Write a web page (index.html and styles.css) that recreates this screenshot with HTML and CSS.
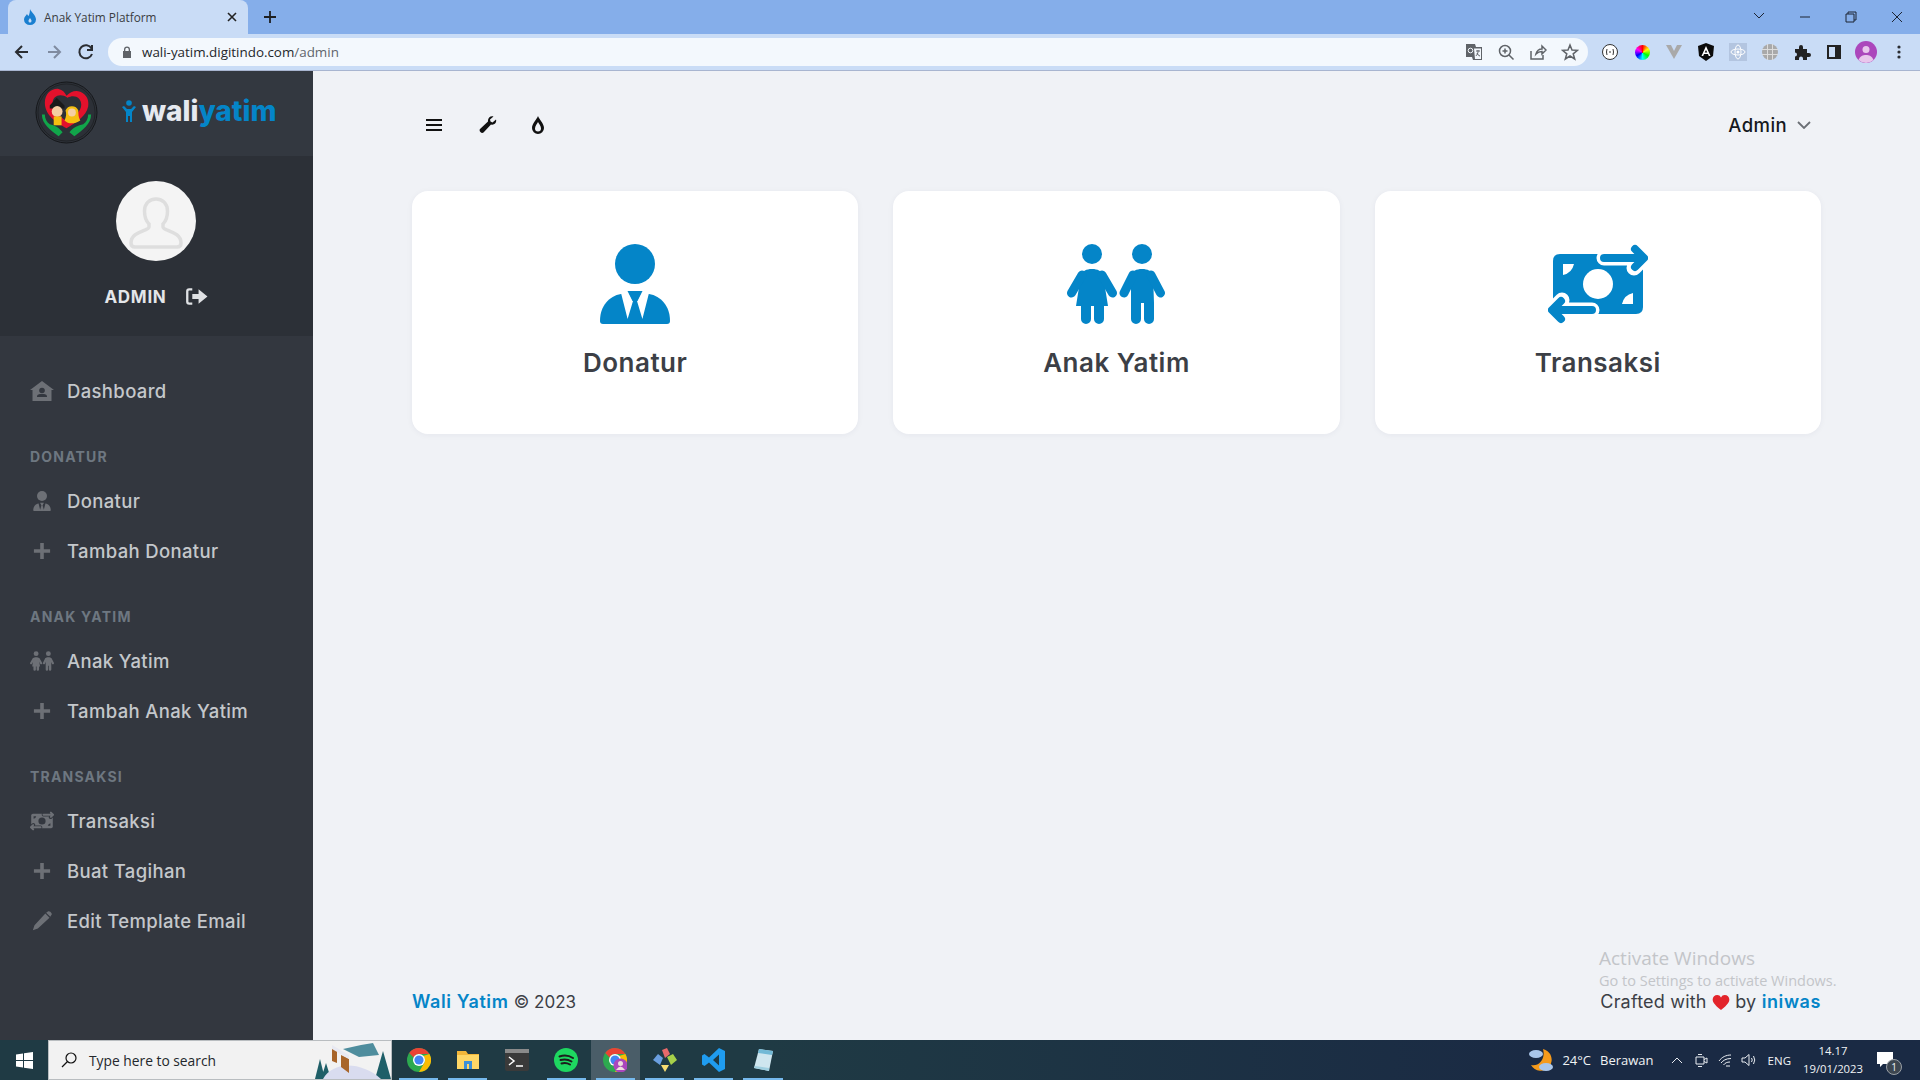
FILE: index.html
```html
<!DOCTYPE html>
<html lang="id">
<head>
<meta charset="utf-8">
<title>Anak Yatim Platform</title>
<link rel="stylesheet" href="styles.css">
</head>
<body>
<svg class="defs" width="0" height="0">
  <symbol id="i-person" viewBox="0 0 70 80">
    <circle cx="35" cy="20" r="20"/>
    <path d="M0 77C0 62 9 52 21 50L49 50C61 52 70 62 70 77Q70 80 67 80L3 80Q0 80 0 77Z"/>
    <path class="cut" d="M21 49L27.6 75 33 57 28 47ZM49 49L42.4 75 37 57 42 47Z"/>
    <path d="M27.5 47H42.5L37.5 57H32.5Z"/>
  </symbol>
  <symbol id="i-kids" viewBox="0 0 98 80">
    <circle cx="25" cy="10" r="10"/>
    <circle cx="75" cy="10" r="10"/>
    <path d="M25 25C31 25 34 27 36 31L41 62H37V75A5 5 0 0 1 27 75V62H24V75A5 5 0 0 1 14 75V62H9L14 31C16 27 19 25 25 25Z"/>
    <path class="limb" d="M15 31 4.500 49M35 31 45.500 49"/>
    <path d="M75 25C81 25 84 27 86 31L87 59V75A5 5 0 0 1 77 75V59H74V75A5 5 0 0 1 64 75V59L64 31C66 27 69 25 75 25Z"/>
    <path class="limb" d="M66 31 57 49M84 31 93.500 49"/>
  </symbol>
  <symbol id="i-money" viewBox="0 0 100 80">
    <path d="M12 10H88Q95 10 95 17V63Q95 70 88 70H12Q5 70 5 63V17Q5 10 12 10Z"/>
    <circle class="cut" cx="50" cy="40" r="15"/>
    <path class="cut" d="M15 20H26Q24 29 15 31ZM85 60H74Q76 51 85 49Z"/>
    <g class="cutline">
      <path d="M56 14H90M86 4 96 14 86 24"/>
      <path d="M44 66H10M14 56 4 66 14 76"/>
    </g>
    <g class="arrow">
      <path d="M56 14H92M87 5 96 14 87 23"/>
      <path d="M44 66H8M13 57 4 66 13 75"/>
    </g>
  </symbol>
  <symbol id="i-plus" viewBox="0 0 20 20"><path d="M8 1H12V8H19V12H12V19H8V12H1V8H8Z"/></symbol>
  <symbol id="i-chrome" viewBox="0 0 24 24">
    <circle cx="12" cy="12" r="12" fill="#2da94f"/>
    <path fill="#ea4335" d="M12 0A12 12 0 0 1 22.4 6H12A6 6 0 0 0 6.6 9.5L2.2 5A12 12 0 0 1 12 0Z"/>
    <path fill="#fbbc04" d="M22.4 6A12 12 0 0 1 12 24L17.2 15A6 6 0 0 0 16 8Z"/>
    <circle cx="12" cy="12" r="6" fill="#fff"/>
    <circle cx="12" cy="12" r="4.6" fill="#4285f4"/>
  </symbol>
</svg>

<header class="tabstrip">
  <div class="tab">
    <svg class="favicon" viewBox="0 0 14 16"><path fill-rule="evenodd" d="M7 0C8 3 13 6 13 10.500A6 5.500 0 0 1 1 10.500C1 8 3 6.500 4 5 4.500 6 5 6.500 5.500 7 6.500 5 7 2.500 7 0ZM7 9C6 10.500 5.500 11 5.500 12A1.500 1.500 0 0 0 8.500 12C8.500 11 8 10.500 7 9Z" fill="#1a7fd0"/></svg>
    <span class="tab-title">Anak Yatim Platform</span>
    <svg class="tab-close" viewBox="0 0 10 10"><path d="M1 1 9 9M9 1 1 9"/></svg>
  </div>
  <svg class="new-tab" viewBox="0 0 12 12"><path d="M6 0V12M0 6H12"/></svg>
  <div class="window-controls">
    <svg class="win-btn" viewBox="0 0 46 28"><path d="M18 10 23 15 28 10"/></svg>
    <svg class="win-btn" viewBox="0 0 46 28"><path d="M18 14H28"/></svg>
    <svg class="win-btn" viewBox="0 0 46 28"><path d="M18 11H26V19H18ZM20 11V9H28V17H26"/></svg>
    <svg class="win-btn" viewBox="0 0 46 28"><path d="M18 9 28 19M28 9 18 19"/></svg>
  </div>
</header>

<div class="toolbar">
  <svg class="nav-btn" viewBox="0 0 32 32"><path d="M22 16H10M16 10 10 16 16 22"/></svg>
  <svg class="nav-btn nav-off" viewBox="0 0 32 32"><path d="M10 16H22M16 10 22 16 16 22"/></svg>
  <svg class="nav-btn" viewBox="0 0 32 32"><path d="M21.500 12.500A6.500 6.500 0 1 0 22 18M22 9V14H17"/></svg>
  <div class="omnibox">
    <svg class="lock" viewBox="0 0 10 12"><path d="M1 5H2V3.500A3 3 0 0 1 8 3.500V5H9V12H1ZM3.300 5H6.700V3.500A1.700 1.700 0 0 0 3.300 3.500Z"/></svg>
    <span class="url">wali-yatim.digitindo.com<span class="url-path">/admin</span></span>
    <span class="omni-actions">
      <svg class="tb-icon" viewBox="0 0 18 18"><path fill="#5f6368" d="M1 1H10L11 4H17V17H8L7 14H1Z"/><path fill="#f3f8fd" d="M9 5.500H16V16H10Z"/><path fill="none" stroke="#5f6368" d="M11 8H15M13 7V8.500C13 10.500 12 12 10.800 13M12 10C12.500 11.500 13.500 12.500 15 13"/><circle cx="5.500" cy="7.500" r="2.300" fill="none" stroke="#f3f8fd"/></svg>
      <svg class="tb-icon stroke" viewBox="0 0 18 18"><circle cx="8" cy="8" r="5.500"/><path d="M12 12 16.500 16.500M8 5.500V10.500M5.500 8H10.500"/></svg>
      <svg class="tb-icon stroke" viewBox="0 0 18 18"><path d="M2 8V16H14V12M7 11C8 7 11 6 13 6V3L17 7 13 11V8.500C10 8.500 8.500 9.500 7 11Z"/></svg>
      <svg class="tb-icon stroke" viewBox="0 0 18 18"><path d="M9 2 11 7 16.500 7.300 12.200 10.800 13.700 16 9 13 4.300 16 5.800 10.800 1.500 7.300 7 7Z"/></svg>
    </span>
  </div>
  <div class="extensions">
    <svg class="ext" viewBox="0 0 18 18"><circle cx="9" cy="9" r="7.500" fill="#fff" stroke="#333"/><path fill="none" stroke="#333" d="M6 6Q5 9 6 12M12 6Q13 9 12 12M8 9H10"/></svg>
    <span class="ext-slot"><span class="ext-wheel"></span></span>
    <svg class="ext" viewBox="0 0 18 18"><path fill="#a9a9a9" d="M1 2H17L9 16Z"/><path fill="#c9dcf6" d="M6 2H12L9 8Z"/></svg>
    <svg class="ext" viewBox="0 0 18 18"><path fill="#0b0b0b" d="M9 0 17 3 16 13 9 18 2 13 1 3Z"/><path fill="#fff" d="M9 3 13.500 13H11.800L11 11H7L6.200 13H4.500ZM9 7 7.700 9.600H10.300Z"/></svg>
    <svg class="ext ext-react" viewBox="0 0 18 18"><g fill="none" stroke="#fff"><ellipse cx="9" cy="9" rx="7" ry="3"/><ellipse cx="9" cy="9" rx="3" ry="7"/></g><circle cx="9" cy="9" r="1.500" fill="#fff"/></svg>
    <svg class="ext" viewBox="0 0 18 18"><circle cx="9" cy="9" r="8" fill="#a9a9a9"/><path fill="none" stroke="#dcdcdc" d="M1 6.500H17M1 11.500H17M6.500 1V17M11.500 1V17"/></svg>
    <svg class="ext" viewBox="0 0 18 18"><path fill="#222" d="M2 6H6V4A2 2 0 0 1 10 4V6H14V10H16A2 2 0 0 1 16 14H14V17H10V15.500A2 2 0 0 0 6 15.500V17H2V13.500A2 2 0 0 0 2 9.500Z"/></svg>
    <svg class="ext" viewBox="0 0 18 18"><path fill="#222" fill-rule="evenodd" d="M2 2H16V16H2ZM4 4V14H10V4Z"/></svg>
    <svg class="avatar-chip" viewBox="0 0 22 22"><circle cx="11" cy="11" r="11" fill="#ab47bc"/><circle cx="11" cy="8.500" r="3.500" fill="#e8c6ec"/><path d="M3.500 19A11 11 0 0 0 18.500 19C17 15 14 14 11 14S5 15 3.500 19Z" fill="#e8c6ec"/></svg>
    <svg class="dots" viewBox="0 0 4 14"><circle cx="2" cy="2" r="1.600"/><circle cx="2" cy="7" r="1.600"/><circle cx="2" cy="12" r="1.600"/></svg>
  </div>
</div>

<div class="app">
  <aside class="sidebar">
    <div class="brand">
      <svg class="logo" viewBox="0 0 64 64">
        <circle cx="32" cy="32" r="31" fill="#2c3037" stroke="#15171a"/>
        <circle cx="32" cy="32" r="29" fill="none" stroke="#17191c" stroke-width="0.600"/>
        <path fill="#e3112c" d="M32 48C22 42 10 35 10 22 10 12 18 7 24 8 28 9 30 11 32 15 36 11 41 9 46 11 53 14 55 20 54 26 52 36 42 42 32 48Z"/>
        <path fill="#2c3037" d="M33 17C26 12 18 15 18 22 18 30 25 35 32 41 39 37 47 31 47 24 47 17 40 13 33 17Z"/>
        <path fill="#1a1a1a" d="M15 25 22 17 30 25V28H15Z"/>
        <circle cx="22.500" cy="31" r="5.500" fill="#f5cfa3"/>
        <path fill="#f5bf10" d="M19 36H27V45H19Z"/>
        <path fill="#f5bf10" d="M30 40C32 36 32 33 31 30A7 7 0 0 1 44 30C44 33 44 37 46 40 40 44 34 44 30 40Z"/>
        <circle cx="37.500" cy="32" r="4" fill="#f5cfa3"/>
        <path fill="#11a54a" d="M7 34C7 44 16 50 24 56L28 52C24 47 20 45 15 44 12 42 10 38 10 34ZM57 34C57 44 48 50 40 56L35 52C39 47 44 45 49 44 52 42 54 38 54 34Z"/>
      </svg>
      <span class="wordmark">
        <svg class="wordmark-fig" viewBox="0 0 14 22"><circle cx="7" cy="3" r="2.800"/><path d="M0 7 2 6 5 9H9L12 6 14 7 10 12V22H8V16H6V22H4V12Z"/></svg>
        <span class="wm-white">wali</span><span class="wm-blue">yatim</span>
      </span>
    </div>
    <div class="user-box">
      <svg class="user-avatar" viewBox="0 0 80 80">
        <circle cx="40" cy="40" r="40" fill="#f4f4f4"/>
        <path fill="none" stroke="#dedede" stroke-width="3.500" d="M40 18C33 18 28.500 23 28.500 30 28.500 35 30 40 33 43V46C33 50 15 50 15 62 15 65 17 66 19 66H61C63 66 65 65 65 62 65 50 47 50 47 46V43C50 40 51.500 35 51.500 30 51.500 23 47 18 40 18Z"/>
      </svg>
      <div class="user-name">ADMIN
        <svg class="logout" viewBox="0 0 21 16"><path fill="none" stroke="#dfe1e4" stroke-width="2.200" d="M6 1.200H3Q1.200 1.200 1.200 3V13Q1.200 14.800 3 14.800H6"/><path fill="#dfe1e4" d="M6 5.500H12V1L20.500 8 12 15V10.500H6Z"/></svg>
      </div>
    </div>
    <nav class="menu">
      <a class="item"><svg class="item-icon" viewBox="0 0 24 20"><path d="M12 0 24 9H21.500V20H2.500V9H0Z"/><circle class="hole" cx="12" cy="9.500" r="2.800"/><path class="hole" d="M7 16C7 13 9 13 12 13S17 13 17 16Z"/></svg>Dashboard</a>
      <div class="label">DONATUR</div>
      <a class="item"><svg class="item-icon icon-gray" viewBox="0 0 24 22"><use href="#i-person"/></svg>Donatur</a>
      <a class="item"><svg class="item-icon icon-plus" viewBox="0 0 20 20"><use href="#i-plus"/></svg>Tambah Donatur</a>
      <div class="label">ANAK YATIM</div>
      <a class="item"><svg class="item-icon icon-gray" viewBox="0 0 24 20"><use href="#i-kids"/></svg>Anak Yatim</a>
      <a class="item"><svg class="item-icon icon-plus" viewBox="0 0 20 20"><use href="#i-plus"/></svg>Tambah Anak Yatim</a>
      <div class="label">TRANSAKSI</div>
      <a class="item"><svg class="item-icon icon-gray" viewBox="0 0 24 20"><use href="#i-money"/></svg>Transaksi</a>
      <a class="item"><svg class="item-icon icon-plus" viewBox="0 0 20 20"><use href="#i-plus"/></svg>Buat Tagihan</a>
      <a class="item"><svg class="item-icon" viewBox="0 0 24 24"><path d="M16 3 21 8 7 21 1 23 3 17ZM17 2 19 0.500C20 0 21 0 22 1L23 2C24 3 24 4 23 5L22 7Z"/></svg>Edit Template Email</a>
    </nav>
  </aside>

  <main class="content">
    <div class="topbar">
      <svg class="top-icon" viewBox="0 0 18 18"><path d="M1 3H17V5H1ZM1 8H17V10H1ZM1 13H17V15H1Z"/></svg>
      <svg class="top-icon" viewBox="0 0 18 18"><path d="M17 3.500 13.500 6.500 11.500 5.500 11 3.500 14.500 0.500C11.500 -0.500 8.500 2 9 5.500L1 13C-0.500 15 2.500 18 4.500 16.500L12 8.500C15.500 9.500 18 6.500 17 3.500Z"/></svg>
      <svg class="top-icon" viewBox="0 0 18 18"><path fill-rule="evenodd" d="M9 0C10 3 15 7.500 15 12A6 6 0 0 1 3 12C3 7.500 8 3 9 0ZM9 6C8 8 6 10 6 12.500A3 3 0 0 0 12 12.500C12 10 10 8 9 6Z"/></svg>
      <div class="admin-menu">Admin
        <svg class="caret" viewBox="0 0 14 8"><path d="M1 1 7 7 13 1"/></svg>
      </div>
    </div>
    <section class="cards">
      <article class="card">
        <svg class="card-icon person" viewBox="0 0 70 80"><use href="#i-person"/></svg>
        <h2 class="card-title">Donatur</h2>
      </article>
      <article class="card">
        <svg class="card-icon kids" viewBox="0 0 98 80"><use href="#i-kids"/></svg>
        <h2 class="card-title">Anak Yatim</h2>
      </article>
      <article class="card">
        <svg class="card-icon money" viewBox="0 0 100 80"><use href="#i-money"/></svg>
        <h2 class="card-title">Transaksi</h2>
      </article>
    </section>
    <footer class="foot">
      <div><a class="foot-link">Wali Yatim</a> <span class="copy">© 2023</span></div>
      <div class="foot-right">Crafted with <svg class="heart" viewBox="0 0 20 18"><path d="M10 18C5 14 0 10 0 5.500 0 2 2.500 0 5.500 0 7.500 0 9 1 10 3 11 1 12.500 0 14.500 0 17.500 0 20 2 20 5.500 20 10 15 14 10 18Z"/></svg> by <a class="foot-link">iniwas</a></div>
    </footer>
    <div class="watermark">
      <div class="wm-title">Activate Windows</div>
      <div class="wm-sub">Go to Settings to activate Windows.</div>
    </div>
  </main>
</div>

<footer class="taskbar">
  <svg class="start" viewBox="0 0 17 17"><path d="M0 2.500 7 1.500V8H0ZM8 1.300 17 0V8H8ZM0 9H7V15.500L0 14.500ZM8 9H17V17L8 15.700Z"/></svg>
  <div class="search">
    <svg class="search-icon" viewBox="0 0 16 16"><circle cx="10" cy="6" r="5"/><path d="M6.500 9.500 1 15"/></svg>
    <span class="search-text">Type here to search</span>
    <svg class="scene" viewBox="0 0 80 38">
      <path fill="#1f5f68" d="M4 38 9 18 14 38ZM10 38 15 22 20 38ZM64 38 72 10 80 38Z"/>
      <path fill="#d9dcef" d="M12 38C22 20 50 20 70 38Z"/>
      <path fill="#a8652a" d="M21 6 26 8V22L21 20ZM30 14 38 18V32L30 26Z"/>
      <path fill="#e8e9f2" d="M21 4 38 14 38 18 21 8Z"/>
      <path fill="#4f8d9d" d="M32 8 50 4 62 2 68 14 48 16Z"/>
    </svg>
  </div>
  <div class="task-apps">
    <span class="app-slot running"><svg class="app-icon" viewBox="0 0 24 24"><use href="#i-chrome"/></svg></span>
    <span class="app-slot active"><svg class="app-icon" viewBox="0 0 24 24"><path fill="#f3b73a" d="M1 3H10L12 6H23V21H1Z"/><path fill="#ffd766" d="M1 7H23V21H1Z"/><path fill="#3c8fd9" d="M8 13H16V21H13V16H11V21H8Z"/></svg></span>
    <span class="app-slot"><svg class="app-icon" viewBox="0 0 24 24"><rect y="1" width="24" height="22" rx="2" fill="#3a3a3a"/><rect y="1" width="24" height="4" fill="#8a8a8a"/><path d="M4 9 9 13 4 17M11 18H18" fill="none" stroke="#fff" stroke-width="1.500"/></svg></span>
    <span class="app-slot running"><svg class="app-icon" viewBox="0 0 24 24"><circle cx="12" cy="12" r="12" fill="#1ed760"/><path d="M5.500 8.500C10 7 15 7.500 19 10M6.500 12C10 11 14.500 11.500 17.500 13.500M7.500 15.500C10.500 14.500 13.500 15 16 16.500" fill="none" stroke="#1d1d1d" stroke-width="2" stroke-linecap="round"/></svg></span>
    <span class="app-slot running current"><svg class="app-icon" viewBox="0 0 24 24"><use href="#i-chrome"/><circle cx="17.500" cy="17.500" r="7" fill="#ab47bc"/><circle cx="17.500" cy="15.500" r="2.500" fill="#edd"/><path d="M13 22Q17.500 15 22 22Z" fill="#edd"/></svg></span>
    <span class="app-slot running"><svg class="app-icon" viewBox="0 0 24 24"><path fill="#e86a6a" d="M9 2 14 0 17 6 12 10Z"/><path fill="#a6d04a" d="M14 9 20 6 24 12 18 17Z"/><path fill="#6a9fe0" d="M5 6 10 10 7 17 0 12Z"/><path fill="#f7dd72" d="M8 17 16 17 12 24Z"/></svg></span>
    <span class="app-slot running"><svg class="app-icon" viewBox="0 0 24 24"><path fill="#1f9cf0" d="M17 0 23 3V21L17 24 7 14.500 2.500 18 0 16.500V7.500L2.500 6 7 9.500ZM17 6.500 11 12 17 17.500Z"/></svg></span>
    <span class="app-slot running"><svg class="app-icon" viewBox="0 0 24 24"><path fill="#cfe6ef" d="M8 1 22 3 18 23 3 20Z"/><path fill="#72b9d6" d="M8 1 22 3 21 7 7 5Z"/><path fill="#9fcfe0" d="M4 18 18 20 18 23 3 20Z"/></svg></span>
  </div>
  <div class="tray">
    <svg class="weather" viewBox="0 0 26 24"><path fill="#f59a1b" d="M15 1A11 11 0 1 1 3 17C10 19 18 12 15 1Z"/><ellipse cx="8" cy="6" rx="7" ry="4" fill="#a9c6ea"/><ellipse cx="18" cy="19" rx="7" ry="4" fill="#a9c6ea"/></svg>
    <span class="tray-temp">24°C</span>
    <span class="tray-cond">Berawan</span>
    <svg class="tray-icon" viewBox="0 0 16 16"><path d="M3 11 8 6 13 11"/></svg>
    <svg class="tray-icon" viewBox="0 0 16 16"><path d="M3 5H11V12H3ZM11 7.500 14 6V11L11 9.500M5 2.500H9M5 14.500H9"/></svg>
    <svg class="tray-icon" viewBox="0 0 16 16"><path d="M2 9C5 5 9 3 14 3M4 11C6 8.500 9 6.500 14 6.500M6.500 13C8 11 10 10 13 10M9 14H13"/></svg>
    <svg class="tray-icon" viewBox="0 0 16 16"><path d="M1 6H4L8 2.500V13.500L4 10H1ZM10.500 6Q12 8 10.500 10M12.500 4Q15 8 12.500 12"/></svg>
    <span class="tray-lang">ENG</span>
    <div class="clock"><div>14.17</div><div>19/01/2023</div></div>
    <div class="notify">
      <svg class="notify-icon" viewBox="0 0 16 16"><path d="M0 0H16V12H6L3 15V12H0Z"/></svg>
      <span class="notify-count">1</span>
    </div>
  </div>
</footer>
</body>
</html>
```

FILE: styles.css
```css
* { box-sizing: border-box; }
html, body { margin: 0; padding: 0; height: 100%; }
body {
  width: 1920px;
  height: 1080px;
  overflow: hidden;
  display: flex;
  flex-direction: column;
  font-family: Inter, "Liberation Sans", sans-serif;
  background: #f0f2f6;
  --ink: #0485c8;
  --cut: #fff;
}
.defs { position: absolute; }
.cut { fill: var(--cut); }
.cutline { fill: none; stroke: var(--cut); stroke-width: 15; stroke-linecap: round; stroke-linejoin: round; }
.arrow { fill: none; stroke: var(--ink); stroke-width: 8; stroke-linecap: round; stroke-linejoin: round; }
.limb { fill: none; stroke: var(--ink); stroke-width: 9; stroke-linecap: round; }

/* browser chrome */
.tabstrip {
  height: 34px;
  flex: none;
  display: flex;
  align-items: center;
  background: #85aeea;
  padding-left: 8px;
}
.tab {
  width: 240px;
  height: 34px;
  background: #c9dcf6;
  border-radius: 8px 8px 0 0;
  display: flex;
  align-items: center;
  padding: 0 11px 0 15px;
  font: 11.800px "Open Sans", sans-serif;
  color: #3a3d42;
}
.favicon { width: 14px; height: 16px; flex: none; }
.tab-title { margin-left: 7px; flex: 1; }
.tab-close { width: 10px; height: 10px; fill: none; stroke: #222; stroke-width: 1.600; }
.new-tab { width: 12px; height: 12px; margin-left: 16px; fill: none; stroke: #1d1f22; stroke-width: 1.800; }
.window-controls {
  margin-left: auto;
  display: flex;
}
.win-btn { width: 46px; height: 28px; fill: none; stroke: #1c2433; stroke-width: 1; }

.toolbar {
  height: 37px;
  flex: none;
  display: flex;
  align-items: center;
  background: #c9dcf6;
  border-bottom: 1px solid #a8b5d0;
  padding-left: 6px;
}
.nav-btn { width: 32px; height: 32px; fill: none; stroke: #2a2d32; stroke-width: 2; flex: none; }
.nav-off { stroke: #7f8ba0; }
.omnibox {
  margin-left: 6px;
  width: 1480px;
  height: 28px;
  border-radius: 14px;
  background: #f3f8fd;
  display: flex;
  align-items: center;
  padding-left: 14px;
  font: 13.400px "Open Sans", sans-serif;
  color: #24272b;
}
.lock { width: 10px; height: 12px; fill: #5f6368; flex: none; }
.url { margin-left: 10px; }
.url-path { color: #60656c; }
.omni-actions {
  margin-left: auto;
  display: flex;
  gap: 14px;
  padding-right: 9px;
}
.tb-icon { width: 18px; height: 18px; }
.tb-icon.stroke { fill: none; stroke: #5f6368; stroke-width: 1.500; }
.extensions {
  display: flex;
  align-items: center;
  margin-left: 13px;
  gap: 14px;
}
.ext { width: 18px; height: 18px; flex: none; }
.ext-react { background: #b3c5e0; }
.ext-slot { width: 18px; height: 18px; display: flex; align-items: center; justify-content: center; }
.ext-wheel {
  width: 15px;
  height: 15px;
  border-radius: 50%;
  background: conic-gradient(#f00, #ff0, #0f0, #0ff, #00f, #f0f, #f00);
}
.avatar-chip { width: 22px; height: 22px; margin-left: -2px; }
.dots { width: 4px; height: 14px; fill: #2a2d32; margin-left: 6px; }

/* app frame */
.app { flex: 1; display: flex; min-height: 0; }
.sidebar {
  width: 313px;
  flex: none;
  background: #33373f;
  display: flex;
  flex-direction: column;
}
.brand {
  height: 85px;
  flex: none;
  display: flex;
  align-items: center;
  padding: 0 0 2px 35px;
  background: #333840;
}
.logo { width: 63px; height: 63px; flex: none; }
.wordmark {
  margin: -3px 0 0 24px;
  display: flex;
  align-items: center;
  font: 800 28px/1 Inter, sans-serif;
}
.wordmark-fig { width: 14px; height: 22px; fill: #0485c8; margin-right: 6px; }
.wm-white { color: #e6e9f0; }
.wm-blue { color: #0485c8; }
.user-box {
  height: 180px;
  flex: none;
  background: #2c3037;
  padding: 25px 1px 0 0;
  display: flex;
  flex-direction: column;
  align-items: center;
}
.user-avatar { width: 80px; height: 80px; }
.user-name {
  margin-top: 24px;
  display: flex;
  align-items: center;
  gap: 17px;
  font-size: 17px;
  font-weight: 700;
  line-height: 24px;
  letter-spacing: 0.7px;
  color: #e4e6e9;
}
.logout { width: 22px; height: 17px; margin: -1px 0 0 2px; }
.menu { padding-top: 30px; }
.item {
  height: 50px;
  display: flex;
  align-items: center;
  padding-left: 30px;
  font-size: 18.500px;
  font-weight: 500;
  letter-spacing: 0.35px;
  color: #c4c7cb;
}
.item-icon { width: 24px; height: 20px; margin-right: 13px; flex: none; fill: #6d7076; }
.item-icon .hole { fill: #33373f; }
.icon-gray { --ink: #6d7076; --cut: #33373f; fill: #6d7076; }
.icon-plus { height: 18px; }
.label {
  margin-top: 31px;
  margin-bottom: 9px;
  padding-left: 30px;
  height: 20px;
  line-height: 20px;
  font-size: 14px;
  font-weight: 700;
  letter-spacing: 1.200px;
  color: #6e7781;
}

/* main */
.content {
  flex: 1;
  min-width: 0;
  display: flex;
  flex-direction: column;
  padding: 0 99px;
  position: relative;
}
.topbar {
  height: 120px;
  flex: none;
  display: flex;
  align-items: center;
  padding: 0 10px 12px 13px;
}
.top-icon { width: 18px; height: 18px; fill: #111; margin-right: 36px; }
.top-icon:nth-child(2) { margin-right: 32px; }
.admin-menu {
  margin-left: auto;
  display: flex;
  align-items: center;
  gap: 10px;
  font-size: 18.500px;
  font-weight: 500;
  letter-spacing: 0.4px;
  color: #15181d;
}
.caret { width: 14px; height: 8px; fill: none; stroke: #6b6f75; stroke-width: 1.800; }
.cards {
  display: grid;
  grid-template-columns: repeat(3, 1fr);
  gap: 35px;
}
.card {
  height: 243px;
  background: #fff;
  border-radius: 16px;
  box-shadow: 0 1px 6px rgba(30, 40, 70, 0.05);
  display: flex;
  flex-direction: column;
  align-items: center;
  padding-top: 53px;
}
.card-icon { height: 80px; fill: #0485c8; flex: none; }
.person { width: 70px; }
.kids { width: 98px; }
.money { width: 100px; }
.card-title {
  margin: 22px 0 0;
  font-size: 26px;
  line-height: 34px;
  font-weight: 600;
  letter-spacing: 0.5px;
  color: #3c3f46;
}
.foot {
  margin-top: auto;
  padding: 0 0 26px;
  display: flex;
  justify-content: space-between;
  align-items: center;
  font-size: 18px;
  line-height: 24px;
  letter-spacing: 0.2px;
  color: #3c3f46;
}
.foot-link { color: #0485c8; font-weight: 600; letter-spacing: 0.6px; }
.copy { font-size: 17px; letter-spacing: 0; }
.heart { width: 18px; height: 15px; fill: #e3242b; vertical-align: -2px; }
.watermark {
  position: absolute;
  left: 1286px;
  top: 875px;
  font-family: "Open Sans", sans-serif;
  color: #c3c5c9;
}
.wm-title { font-size: 19px; line-height: 25px; }
.wm-sub { font-size: 14.500px; line-height: 20px; }

/* taskbar */
.taskbar {
  height: 40px;
  flex: none;
  display: flex;
  align-items: center;
  background: linear-gradient(90deg, #1f3a44 0%, #1f3a44 40%, #1a2a44 80%);
  color: #f1f3f5;
  font: 12px "Open Sans", sans-serif;
}
.start { width: 17px; height: 17px; margin: 0 15px 0 16px; fill: #fff; flex: none; }
.search {
  width: 344px;
  height: 40px;
  flex: none;
  background: #f2f2f2;
  border: 1px solid #b9bdc0;
  display: flex;
  align-items: center;
  padding-left: 12px;
  color: #24282c;
  font-size: 13.800px;
}
.search-icon { width: 16px; height: 16px; fill: none; stroke: #111; stroke-width: 1.200; flex: none; }
.search-text { margin-left: 12px; }
.scene { width: 80px; height: 38px; margin-left: auto; flex: none; }
.task-apps { display: flex; margin-left: 2px; }
.app-slot {
  width: 49.200px;
  height: 40px;
  display: flex;
  align-items: center;
  justify-content: center;
  position: relative;
}
.app-slot.running::after, .app-slot.active::after {
  content: "";
  position: absolute;
  left: 5px;
  right: 5px;
  bottom: 0;
  height: 2px;
  background: #76b9ed;
}
.app-slot.current { background: #4a5d68; }
.app-icon { width: 24px; height: 24px; }
.tray { margin-left: auto; display: flex; align-items: center; height: 40px; }
.weather { width: 26px; height: 24px; margin-right: 8px; }
.tray-temp { margin-right: 9px; font-size: 13px; }
.tray-cond { margin-right: 15px; font-size: 13px; }
.tray-icon { width: 16px; height: 16px; fill: none; stroke: #e9edf2; stroke-width: 1; margin-right: 8px; }
.tray-lang { font-size: 11.500px; margin: 0 9px 0 3px; }
.clock { width: 66px; text-align: center; line-height: 18px; font-size: 11.300px; }
.notify { position: relative; width: 54px; height: 40px; display: flex; align-items: center; padding-left: 11px; }
.notify-icon { width: 16px; height: 16px; fill: #fff; }
.notify-count {
  position: absolute;
  left: 20px;
  top: 19px;
  width: 16px;
  height: 16px;
  border-radius: 50%;
  background: #3d4650;
  border: 1px solid #9aa0a6;
  font-size: 10px;
  line-height: 14px;
  text-align: center;
}
```
